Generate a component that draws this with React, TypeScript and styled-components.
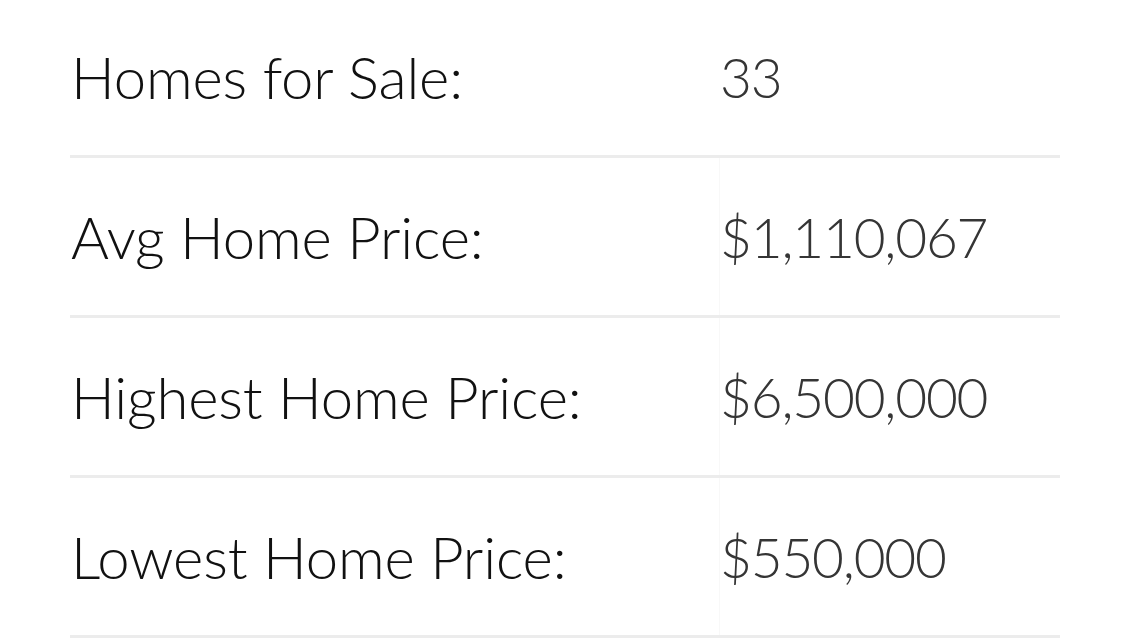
import React from "react";
import styled, { createGlobalStyle } from "styled-components";

const Global = createGlobalStyle`
  html, body { margin: 0; padding: 0; background: #ffffff; }
  body { font-family: "Lato", "Open Sans", sans-serif; }
`;

const Table = styled.div`
  margin: -2px 0 0 70px;
  width: 990px;
  display: flex;
  flex-direction: column;
`;

const Row = styled.div`
  display: grid;
  grid-template-columns: 650px 1fr;
  height: 157px;
  border-bottom: 3px solid #ececec;
`;

const Label = styled.div`
  display: flex;
  align-items: center;
  padding-left: 1px;
  font-size: 58px;
  font-weight: 300;
  color: #111111;
  letter-spacing: -0.15px;
`;

const Value = styled.div<{ $edge: boolean }>`
  display: flex;
  align-items: center;
  border-left: 1px solid ${(p) => (p.$edge ? "#f8f8f8" : "transparent")};
  margin-left: -1px;
  font-size: 55px;
  font-weight: 300;
  color: #353535;
  letter-spacing: -1.2px;
`;

const rows = [
  ["Homes for Sale:", "33"],
  ["Avg Home Price:", "$1,110,067"],
  ["Highest Home Price:", "$6,500,000"],
  ["Lowest Home Price:", "$550,000"],
];

export default function App() {
  return (
    <>
      <Global />
      <Table>
        {rows.map(([l, v], i) => (
          <Row key={l}>
            <Label>{l}</Label>
            <Value $edge={i !== 0}>{v}</Value>
          </Row>
        ))}
      </Table>
    </>
  );
}
